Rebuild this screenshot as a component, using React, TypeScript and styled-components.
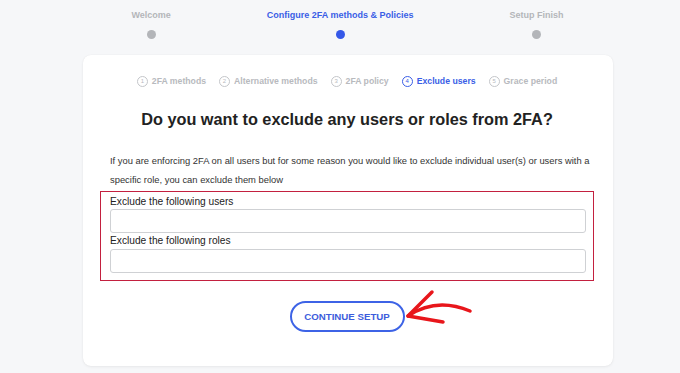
import React from 'react';
import styled, { createGlobalStyle } from 'styled-components';

const GlobalStyle = createGlobalStyle`
  html, body {
    margin: 0;
    padding: 0;
    background: #f6f7f9;
    font-family: "Liberation Sans", Arial, sans-serif;
  }
`;

const Page = styled.div`
  width: 680px;
  height: 373px;
  overflow: hidden;
`;

const Steps = styled.div`
  display: flex;
  justify-content: center;
  gap: 96px;
  padding-top: 10px;
  padding-left: 15px;
  height: 55px;
  box-sizing: border-box;
`;

const Step = styled.div<{ $active?: boolean }>`
  display: flex;
  flex-direction: column;
  align-items: center;
  gap: 10px;
  font-size: 9px;
  line-height: 10px;
  font-weight: bold;
  color: ${(p) => (p.$active ? '#3a5ee6' : '#b4b6ba')};
`;

const Dot = styled.span<{ $active?: boolean }>`
  width: 9px;
  height: 9px;
  border-radius: 50%;
  background: ${(p) => (p.$active ? '#3558e8' : '#b3b5b9')};
`;

const Card = styled.div`
  margin-left: 83px;
  width: 530px;
  height: 311px;
  box-sizing: border-box;
  background: #fff;
  border-radius: 8px;
  box-shadow: 0 1px 3px rgba(0, 0, 0, 0.06), 0 0 1px rgba(0, 0, 0, 0.08);
  padding: 21px 19px 0 17px;
`;

const SubSteps = styled.div`
  display: flex;
  justify-content: center;
  gap: 13px;
  height: 11px;
`;

const SubStep = styled.div<{ $active?: boolean }>`
  display: flex;
  align-items: center;
  gap: 4px;
  font-size: 8.7px;
  line-height: 11px;
  font-weight: bold;
  color: ${(p) => (p.$active ? '#3a5ee6' : '#b8babe')};
`;

const Num = styled.span<{ $active?: boolean }>`
  width: 9px;
  height: 9px;
  border-radius: 50%;
  border: 1px solid ${(p) => (p.$active ? '#3a5ee6' : '#c4c6ca')};
  font-size: 6px;
  font-weight: normal;
  display: flex;
  align-items: center;
  justify-content: center;
`;

const Title = styled.h1`
  margin: 23px 0 0;
  text-align: center;
  font-size: 16.3px;
  line-height: 19px;
  font-weight: bold;
  color: #222;
`;

const Intro = styled.p`
  margin: 22px 0 0;
  padding-left: 10px;
  font-size: 9.4px;
  line-height: 19px;
  color: #333;
`;

const ExcludeBox = styled.div`
  margin-top: 2px;
  border: 1px solid #c3203f;
  padding: 3px 7px 7px 9px;
  display: flex;
  flex-direction: column;
`;

const Label = styled.label<{ $line: number }>`
  font-size: 10.2px;
  color: #222;
  line-height: ${(p) => p.$line}px;
`;

const Input = styled.input`
  flex-shrink: 0;
  height: 24px;
  box-sizing: border-box;
  border: 1px solid #cfd1d4;
  border-radius: 3px;
  margin: 0;
  background: #fff;
`;

const Actions = styled.div`
  display: flex;
  justify-content: center;
  margin-top: 20px;
  position: relative;
`;

const ContinueButton = styled.button`
  width: 115px;
  height: 31px;
  box-sizing: border-box;
  border: 2px solid #3d63e6;
  border-radius: 16px;
  background: #fff;
  color: #3d5ddc;
  font-family: "Liberation Sans", Arial, sans-serif;
  font-size: 9.7px;
  font-weight: bold;
`;

const Arrow = styled.svg`
  position: absolute;
  left: 301px;
  top: -13px;
`;

const top = [
  { label: 'Welcome' },
  { label: 'Configure 2FA methods & Policies', active: true },
  { label: 'Setup Finish' },
];

const sub = [
  { n: 1, label: '2FA methods' },
  { n: 2, label: 'Alternative methods' },
  { n: 3, label: '2FA policy' },
  { n: 4, label: 'Exclude users', active: true },
  { n: 5, label: 'Grace period' },
];

export default function App() {
  return (
    <>
      <GlobalStyle />
      <Page>
        <Steps>
          {top.map((s) => (
            <Step key={s.label} $active={s.active}>
              {s.label}
              <Dot $active={s.active} />
            </Step>
          ))}
        </Steps>
        <Card>
          <SubSteps>
            {sub.map((s) => (
              <SubStep key={s.n} $active={s.active}>
                <Num $active={s.active}>{s.n}</Num>
                {s.label}
              </SubStep>
            ))}
          </SubSteps>
          <Title>Do you want to exclude any users or roles from 2FA?</Title>
          <Intro>
            If you are enforcing 2FA on all users but for some reason you would like to exclude individual user(s) or users with a
            specific role, you can exclude them below
          </Intro>
          <ExcludeBox>
            <Label $line={14}>Exclude the following users</Label>
            <Input />
            <Label $line={16}>Exclude the following roles</Label>
            <Input />
          </ExcludeBox>
          <Actions>
            <ContinueButton>CONTINUE SETUP</ContinueButton>
            <Arrow width="75" height="45" viewBox="0 0 75 45">
              <path d="M7 28 Q35 9 69 23" fill="none" stroke="#e8161b" strokeWidth="3.5" strokeLinecap="round" />
              <path d="M31 4 L7 28 L42 34" fill="none" stroke="#e8161b" strokeWidth="3.5" strokeLinecap="round" strokeLinejoin="round" />
            </Arrow>
          </Actions>
        </Card>
      </Page>
    </>
  );
}
